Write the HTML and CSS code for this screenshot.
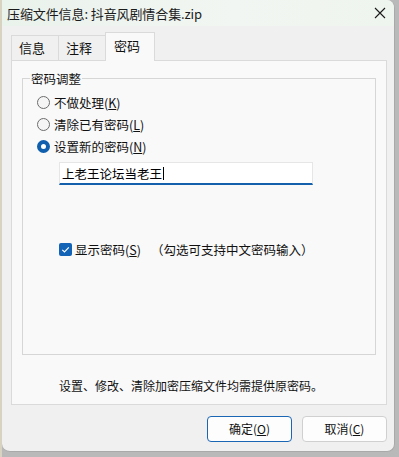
FILE: index.html
```html
<!DOCTYPE html>
<html lang="zh-CN">
<head>
<meta charset="utf-8">
<title>压缩文件信息</title>
<link rel="stylesheet" href="styles.css">
</head>
<body>
<div class="window">
  <div class="titlebar">
    <span class="title">压缩文件信息: 抖音风剧情合集.zip</span>
    <svg class="close" width="12" height="12" viewBox="0 0 12 12"><path d="M1 1 L11 11 M11 1 L1 11" stroke="#1a1a1a" stroke-width="1.1" fill="none"/></svg>
  </div>
  <div class="content">
    <div class="tabs">
      <div class="tab">信息</div>
      <div class="tab">注释</div>
      <div class="tab active">密码</div>
    </div>
    <div class="panel">
      <fieldset class="group">
        <legend>密码调整</legend>
        <div class="radio-row"><span class="radio"></span><span>不做处理(<u>K</u>)</span></div>
        <div class="radio-row"><span class="radio"></span><span>清除已有密码(<u>L</u>)</span></div>
        <div class="radio-row"><span class="radio checked"></span><span>设置新的密码(<u>N</u>)</span></div>
        <div class="input">上老王论坛当老王<span class="caret"></span></div>
        <div class="check-row">
          <span class="checkbox"><svg width="13" height="13" viewBox="0 0 13 13"><path d="M3.3 6.8 L5.5 9 L9.8 4.3" stroke="#fff" stroke-width="1.2" fill="none"/></svg></span>
          <span>显示密码(<u>S</u>)</span>
          <span class="hint">（勾选可支持中文密码输入）</span>
        </div>
      </fieldset>
      <div class="note">设置、修改、清除加密压缩文件均需提供原密码。</div>
    </div>
    <div class="buttons">
      <div class="btn default">确定(<u>O</u>)</div>
      <div class="btn">取消(<u>C</u>)</div>
    </div>
  </div>
</div>
</body>
</html>
```
FILE: styles.css
```css
html, body {
  margin: 0;
  padding: 0;
}
body {
  width: 399px;
  height: 457px;
  overflow: hidden;
  background: linear-gradient(90deg, #d8d2c0 0, #d8d2c0 2px, #b9b9b9 2px);
  font-family: "Noto Sans CJK SC", "Noto Sans", sans-serif;
  color: #111;
  font-size: 12px;
}
.window {
  margin-left: 2px;
  width: 393px;
  height: 452px;
  box-sizing: border-box;
  background: #f0f0f0;
  border: 1px solid #a9a9a9;
  border-top: none;
  border-left: none;
  border-radius: 0 8px 8px 8px;
  overflow: hidden;
  display: flex;
  flex-direction: column;
}
.titlebar {
  height: 26px;
  flex: none;
  display: flex;
  align-items: center;
  justify-content: space-between;
  padding: 0 8px 0 5px;
  background: linear-gradient(90deg, #eaf2ec, #f2f6f2 60%, #eef4ee);
}
.title {
  font-size: 13px;
  color: #1b1b1b;
  letter-spacing: -0.1px;
}
.content {
  flex: 1;
  display: flex;
  flex-direction: column;
  padding: 6px 7px 0 9px;
}
.tabs {
  display: flex;
  align-items: flex-end;
  height: 28px;
  position: relative;
  z-index: 1;
}
.tab {
  width: 47px;
  height: 25px;
  box-sizing: border-box;
  border: 1px solid #dadada;
  border-bottom: none;
  border-right: none;
  background: #f0f0f0;
  font-size: 13px;
  padding-left: 7px;
  line-height: 24px;
}
.tab.active {
  width: 50px;
  height: 29px;
  margin-bottom: -1px;
  background: #f9f9f9;
  border-right: 1px solid #dadada;
  padding-left: 8px;
  line-height: 26px;
}
.panel {
  height: 345px;
  box-sizing: border-box;
  border: 1px solid #dadada;
  background: #f9f9f9;
  padding: 10px 10px 0 10px;
  display: flex;
  flex-direction: column;
}
.group {
  margin: 0;
  height: 284px;
  box-sizing: border-box;
  border: 1px solid #d6d6d6;
  padding: 5px 0 0 14px;
  display: flex;
  flex-direction: column;
}
.group legend {
  margin-left: -7px;
  padding: 0 1px;
  font-size: 12.5px;
  line-height: 15px;
}
.radio-row {
  height: 22px;
  display: flex;
  align-items: center;
  gap: 4px;
  font-size: 12.5px;
}
.radio {
  width: 13px;
  height: 13px;
  box-sizing: border-box;
  border: 1px solid #6c6c6c;
  border-radius: 50%;
  background: #f5f5f5;
}
.radio.checked {
  border: 4px solid #0f5fae;
  background: #fff;
}
.input {
  margin: 5px 0 0 22px;
  width: 254px;
  height: 23px;
  box-sizing: border-box;
  background: #fff;
  border: 1px solid #e6e6e6;
  border-bottom: 2px solid #1560ad;
  padding-left: 2px;
  font-size: 12.5px;
  line-height: 21px;
  color: #000;
  display: flex;
  align-items: center;
}
.caret {
  width: 1px;
  height: 13px;
  background: #000;
  margin-left: 1px;
}
.check-row {
  margin: 55px 0 0 22px;
  display: flex;
  align-items: center;
  height: 18px;
  font-size: 12.5px;
}
.checkbox {
  width: 13px;
  height: 13px;
  border-radius: 2px;
  background: #1363b6;
  margin-right: 3px;
  display: flex;
}
.hint {
  margin-left: 10px;
}
.note {
  margin: 23px 0 0 37px;
  font-size: 12px;
  line-height: 16px;
}
.buttons {
  display: flex;
  justify-content: flex-end;
  gap: 10px;
  margin-top: 11px;
}
.btn {
  width: 85px;
  height: 26px;
  box-sizing: border-box;
  border: 1px solid #d0d0d0;
  border-radius: 4px;
  background: #fdfdfd;
  font-size: 12px;
  line-height: 24px;
  text-align: center;
}
.btn.default {
  border-color: #1a66b5;
}
```
